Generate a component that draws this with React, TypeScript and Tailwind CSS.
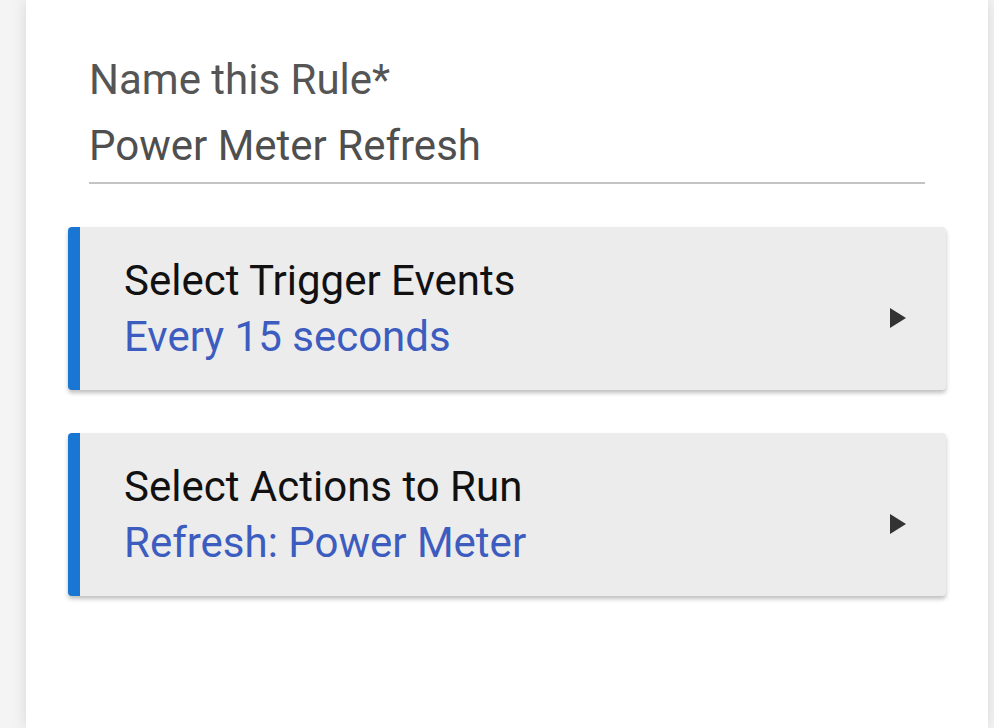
import React from 'react';

const RULES = [
  { title: 'Select Trigger Events', value: 'Every 15 seconds' },
  { title: 'Select Actions to Run', value: 'Refresh: Power Meter' },
];

function Caret() {
  return (
    <svg width="20" height="24" viewBox="0 0 20 24" className="shrink-0 mt-[18px]">
      <path d="M2 2 L18 12 L2 22 Z" fill="#333" />
    </svg>
  );
}

function RuleCard({ title, value }: { title: string; value: string }) {
  return (
    <div className="flex items-center h-[163px] rounded-[4px] bg-[#ececec] border-l-[12px] border-[#1976d2] shadow-[0_3px_4px_rgba(0,0,0,0.25)] pl-[44px] pr-[38px]">
      <div className="flex-1 flex flex-col">
        <div className="text-[42px] leading-[56px] text-[#111]">{title}</div>
        <div className="text-[42px] leading-[56px] text-[#3d5cbf]">{value}</div>
      </div>
      <Caret />
    </div>
  );
}

export default function App() {
  return (
    <div
      className="w-[994px] h-[728px] overflow-hidden bg-[#f4f4f4] pl-[26px]"
      style={{ fontFamily: 'Roboto, "Noto Sans", sans-serif' }}
    >
      <div className="w-[962px] h-full bg-white shadow-[0_0_14px_rgba(0,0,0,0.12)] pt-[58px] pl-[42px] pr-[42px]">
        <div className="ml-[21px] mr-[21px] pb-[14px] border-b-2 border-[#c4c4c4]">
          <div className="text-[42px] leading-[44px] text-[#555]">Name this Rule*</div>
          <div className="mt-[22px] text-[42px] leading-[44px] text-[#4f4f4f]">Power Meter Refresh</div>
        </div>
        <div className="mt-[43px] flex flex-col gap-[43px]">
          {RULES.map((r) => (
            <RuleCard key={r.title} title={r.title} value={r.value} />
          ))}
        </div>
      </div>
    </div>
  );
}
